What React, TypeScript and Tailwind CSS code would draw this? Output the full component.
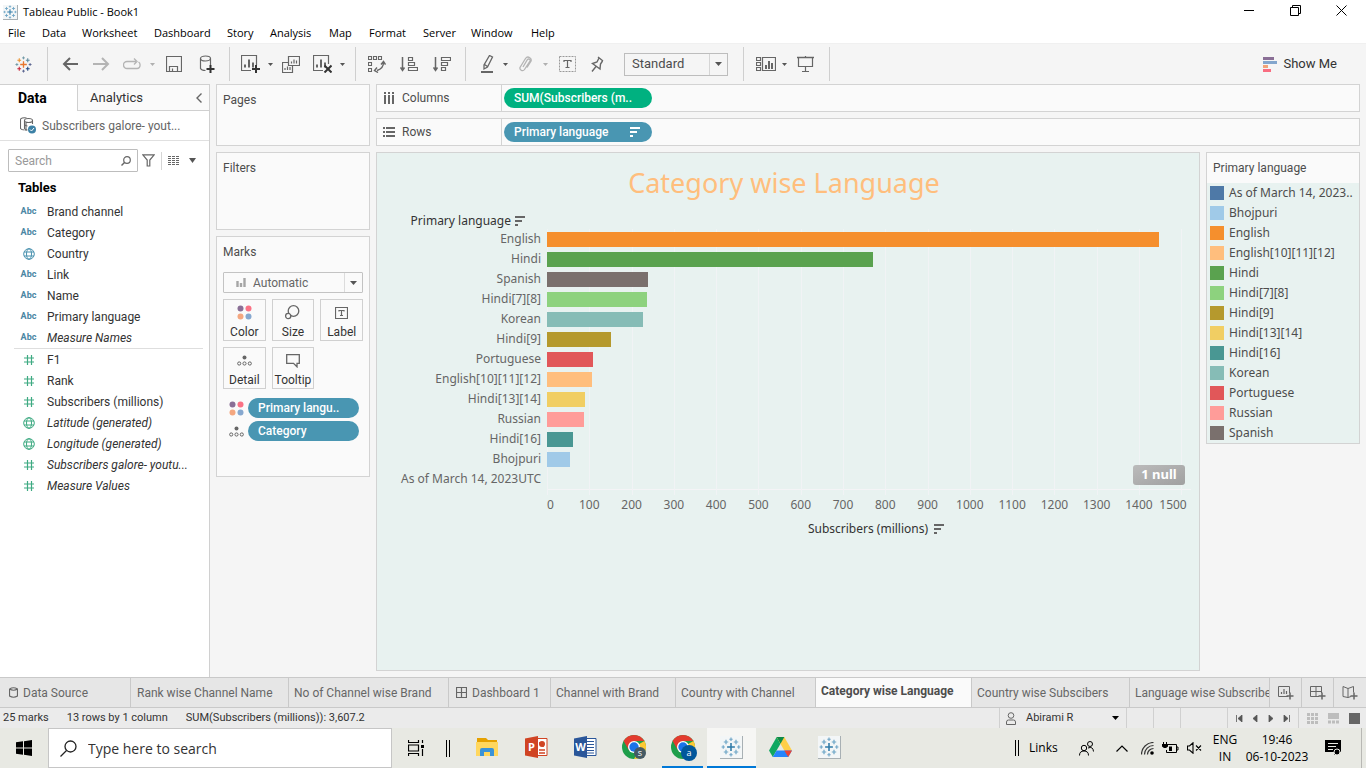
import React from "react";

type Kids = { children?: React.ReactNode };

function Ic({ w, h, children, className = "" }: Kids & { w: number; h: number; className?: string }) {
  return (
    <svg width={w} height={h} viewBox={`0 0 ${w} ${h}`} fill="none" stroke="#666" strokeWidth="1" className={`block shrink-0 ${className}`} aria-hidden="true">
      {children}
    </svg>
  );
}

function Logo({ mono = false, size = 18 }: { mono?: boolean; size?: number }) {
  const c = (x: string) => (mono ? "#6ea5c6" : x);
  return (
    <svg width={size} height={size} viewBox="0 0 18 18" fill="none" strokeWidth="1.1" className="block shrink-0" aria-hidden="true">
      <path d="M9 5.500v7M5.500 9h7" stroke={mono ? "#2f7ba8" : "#e8762d"} strokeWidth="1.4" />
      <path d="M4.500 2.500v4M2.500 4.500h4" stroke={c("#eb912c")} />
      <path d="M13.500 2.500v4M11.500 4.500h4" stroke={c("#59879b")} />
      <path d="M4.500 11.500v4M2.500 13.500h4" stroke={c("#c72035")} />
      <path d="M13.500 11.500v4M11.500 13.500h4" stroke={c("#1f447e")} />
      <path d="M9 .5v3M7.500 2h3" stroke={c("#7199a6")} strokeWidth="1" />
      <path d="M9 14.500v3M7.500 16h3" stroke={c("#5b6591")} strokeWidth="1" />
      <path d="M2 7.500v3M.5 9h3" stroke={c("#7199a6")} strokeWidth="1" />
      <path d="M16 7.500v3M14.500 9h3" stroke={c("#5b6591")} strokeWidth="1" />
    </svg>
  );
}

function LogoTile({ size, pad }: { size: number; pad: string }) {
  return (
    <span className={`block border-r border-b border-[#a8b0b4] bg-[#f3f6f7] ${pad}`}>
      <Logo mono size={size} />
    </span>
  );
}

function Caret({ light = false }: { light?: boolean }) {
  return (
    <svg width="5" height="3" viewBox="0 0 5 3" className="block" aria-hidden="true">
      <path d="M0 0h5L2.500 3z" fill={light ? "#b0b0b0" : "#555"} />
    </svg>
  );
}

function Tool({ label, className, children }: Kids & { label: string; className: string }) {
  return (
    <button type="button" aria-label={label} className={`flex h-full shrink-0 items-center justify-center ${className}`}>
      {children}
    </button>
  );
}

const Sep = ({ className = "" }: { className?: string }) => <span className={`h-[34px] w-px shrink-0 bg-[#cfcfcf] ${className}`} />;

function SortBars({ color = "#666" }: { color?: string }) {
  return (
    <Ic w={10} h={10}>
      <path d="M0 1h10M0 5h7M0 9h3" stroke={color} strokeWidth="2" />
    </Ic>
  );
}

function Bars3({ x, y }: { x: number; y: number }) {
  return <path d={`M${x} ${y}v-3M${x + 4} ${y}v-8M${x + 8} ${y}v-5`} strokeWidth="2" />;
}

function TitleBar() {
  return (
    <header className="flex h-6 items-center bg-white pl-[3px] text-[11px] text-black">
      <LogoTile size={14} pad="" />
      <h1 className="ml-[5px]">Tableau Public - Book1</h1>
      <div className="mr-0.5 ml-auto flex h-full items-center pb-[3px]">
        <button type="button" aria-label="Minimise" className="flex h-full w-[46px] items-center justify-center">
          <Ic w={11} h={11}><path d="M0 5.500h10" stroke="#000" /></Ic>
        </button>
        <button type="button" aria-label="Restore" className="flex h-full w-[46px] items-center justify-center">
          <Ic w={11} h={11}><path d="M.5 2.500h8v8h-8zM2.500 2.500v-2h8v8h-2" stroke="#000" /></Ic>
        </button>
        <button type="button" aria-label="Close" className="flex h-full w-[46px] items-center justify-center">
          <Ic w={11} h={11}><path d="M.5.5l10 10M10.500.5l-10 10" stroke="#000" /></Ic>
        </button>
      </div>
    </header>
  );
}

const menus = [
  ["File", "w-[34px]"],
  ["Data", "w-10"],
  ["Worksheet", "w-[72px]"],
  ["Dashboard", "w-[73px]"],
  ["Story", "w-[43px]"],
  ["Analysis", "w-[59px]"],
  ["Map", "w-10"],
  ["Format", "w-[54px]"],
  ["Server", "w-12"],
  ["Window", "w-[60px]"],
  ["Help", "w-10"],
];

function MenuBar() {
  return (
    <nav aria-label="Main menu" className="flex h-[19px] items-center bg-white pl-2 text-[11px] text-black">
      {menus.map(([m, w]) => (
        <button type="button" key={m} className={`text-left whitespace-nowrap ${w}`}>{m}</button>
      ))}
    </nav>
  );
}

function Toolbar() {
  return (
    <div role="toolbar" aria-label="Worksheet tools" className="flex h-[41px] items-center border-t border-[#f0f0f0] bg-[#f5f5f5]">
      <Tool label="Start page" className="w-[47px]"><Logo size={17} /></Tool>
      <Sep />
      <Tool label="Undo" className="ml-1.5 w-8">
        <Ic w={17} h={14}><path d="M16 7H2M8 1L2 7l6 6" strokeWidth="2" /></Ic>
      </Tool>
      <Tool label="Redo" className="w-[30px]">
        <Ic w={17} h={14}><path d="M0 7h14M9 1l6 6-6 6" stroke="#b4b4b4" strokeWidth="2" /></Ic>
      </Tool>
      <Tool label="Replay" className="w-8">
        <Ic w={18} h={12}><path d="M10 10.500H4a3.500 3.500 0 010-7h9M11 .5l3 3-3 3M14 10.500a3 3 0 003-3.500a3 3 0 00-1.500-3M10 10.500h4" stroke="#b4b4b4" strokeWidth="1.300" /></Ic>
      </Tool>
      <Tool label="Replay options" className="w-[9px]"><Caret light /></Tool>
      <Tool label="Save" className="w-[34px]">
        <Ic w={16} h={16}><path d="M.5.5h15v15H.5zM3.500 15.500v-5h8v5M6.500 15.500v-3" strokeWidth="1.200" /></Ic>
      </Tool>
      <Tool label="New data source" className="w-[30px]">
        <Ic w={17} h={18}><path d="M2.500 3.500v10q1 2 5 2M12.500 3.500V10" strokeWidth="1.200" /><ellipse cx="7.500" cy="3.500" rx="5" ry="2.500" strokeWidth="1.200" /><path d="M12.500 10v8M8.500 14h8" stroke="#333" strokeWidth="2" /></Ic>
      </Tool>
      <Sep className="ml-2" />
      <Tool label="New worksheet" className="ml-1.5 w-[29px]">
        <Ic w={19} h={18}><path d="M10 15.500H.5V.5h15V10" strokeWidth="1.200" /><Bars3 x={4} y={12.500} /><path d="M15 10v8M11 14h8" stroke="#333" strokeWidth="2" /></Ic>
      </Tool>
      <Tool label="New worksheet options" className="w-2.5"><Caret /></Tool>
      <Tool label="Duplicate" className="w-8">
        <Ic w={18} h={17}><path d="M6.500.5h11v9h-11zM6.500 6.500h-6v10h10v-7" strokeWidth="1.200" /><path d="M9.500 7.500v-2M12 7.500v-4M14.500 7.500v-3M3 14v-2M5.500 14v-3.500M8 14v-3" strokeWidth="1.200" /></Ic>
      </Tool>
      <Tool label="Clear sheet" className="w-[30px]">
        <Ic w={19} h={18}><path d="M10 15.500H.5V.5h15V9" strokeWidth="1.200" /><Bars3 x={4} y={12.500} /><path d="M11.500 10.500l7 7M18.500 10.500l-7 7" stroke="#333" strokeWidth="2" /></Ic>
      </Tool>
      <Tool label="Clear options" className="w-2.5"><Caret /></Tool>
      <Sep className="ml-2" />
      <Tool label="Swap rows and columns" className="ml-[5px] w-8">
        <Ic w={18} h={17}><path d="M.5.5h3v3h-3zM5.500.5h3v3h-3zM10.500.5h3v3h-3zM.5 6.500h3v3h-3zM.5 12.500h3v3h-3z" strokeWidth="1.100" /><path d="M15.500 6.500q0 6-6.500 8M13 8.500l2.500-3 2 3M9 11.500l-2.500 3 3.500 2" strokeWidth="1.400" /></Ic>
      </Tool>
      <Tool label="Sort ascending" className="w-8">
        <Ic w={18} h={15}><path d="M2.500 0v13M.5 10.500l2 3 2-3" strokeWidth="1.500" /><path d="M8.500.5h4v3h-4zM8.500 5.500h6v3h-6zM8.500 10.500h9v3h-9z" strokeWidth="1.200" /></Ic>
      </Tool>
      <Tool label="Sort descending" className="w-[34px]">
        <Ic w={18} h={15}><path d="M2.500 0v13M.5 10.500l2 3 2-3" strokeWidth="1.500" /><path d="M8.500.5h9v3h-9zM8.500 5.500h6v3h-6zM8.500 10.500h4v3h-4z" strokeWidth="1.200" /></Ic>
      </Tool>
      <Sep className="ml-1.5" />
      <Tool label="Highlight" className="ml-[7px] w-7">
        <Ic w={13} h={18}><path d="M8.500.5l3 1.500-5 10-3.500 2v-4zM3.500 9.500l3 2" strokeWidth="1.300" /><path d="M0 17h12" strokeWidth="2" /></Ic>
      </Tool>
      <Tool label="Highlight options" className="w-[9px]"><Caret /></Tool>
      <Tool label="Group" className="w-[30px]">
        <Ic w={13} h={16}><path d="M4 11l4.500-7.500a1.500 1.500 0 012.500 1.500l-5.500 8.500a2.500 2.500 0 01-4.500-2L6.500 2.500a3 3 0 015 3.500L8 11.500" stroke="#b4b4b4" strokeWidth="1.300" /></Ic>
      </Tool>
      <Tool label="Group options" className="w-2.5"><Caret light /></Tool>
      <Tool label="Show mark labels" className="w-[34px]">
        <Ic w={17} h={16}><path d="M.5.5h16v15H.5z" stroke="#999" strokeDasharray="2 1" /><path d="M5 6V4.500h7V6M8.500 4.500v7M6.500 11.500h4" strokeWidth="1.200" /></Ic>
      </Tool>
      <Tool label="Fix axes" className="w-[26px]">
        <Ic w={13} h={16}><path d="M7 1l5 4M8 2L6 6 1.500 7.500l7.500 5.500.5-5 2-3M5 10.500L1 15.500" strokeWidth="1.400" /></Ic>
      </Tool>
      <div className="relative ml-3.5 flex h-[23px] w-[104px] shrink-0 items-center border border-[#bdbdbd] bg-[#f5f5f5]">
        <select aria-label="Fit" defaultValue="Standard" className="h-full w-full appearance-none bg-transparent pl-[7px] text-[13px] text-[#4d4d4d]">
          <option>Standard</option>
          <option>Entire View</option>
        </select>
        <span className="pointer-events-none absolute inset-y-0 right-0 flex w-[18px] items-center justify-center border-l border-[#d5d5d5]">
          <svg width="7" height="4" viewBox="0 0 7 4" aria-hidden="true"><path d="M0 0h7L3.500 4z" fill="#555" /></svg>
        </span>
      </div>
      <Sep className="ml-[15px]" />
      <Tool label="Show or hide cards" className="ml-2 w-7">
        <Ic w={20} h={15}><path d="M.5.5h4v3h-4zM.5 5.500h4v3h-4zM.5 10.500h4v3h-4zM6.500.5h13v13h-13z" strokeWidth="1.200" /><path d="M10 12V8M13 12V4M16 12V6" strokeWidth="2" /></Ic>
      </Tool>
      <Tool label="Card options" className="w-2"><Caret /></Tool>
      <Tool label="Presentation mode" className="w-[34px]">
        <Ic w={17} h={16}><path d="M0 1.500h17" strokeWidth="1.500" /><path d="M1.500 2v8.500h14V2M8.500 0v2M8.500 10.500v5M5 15.500h7" strokeWidth="1.200" /></Ic>
      </Tool>
      <Sep className="ml-[7px]" />
      <button type="button" className="mr-[29px] ml-auto flex items-center gap-1.5 text-[13px] text-[#333]">
        <Ic w={14} h={15}>
          <path d="M0 1.500h11" stroke="#8a6f96" strokeWidth="3" />
          <path d="M0 5.500h14" stroke="#83a6cd" strokeWidth="3" />
          <path d="M0 9.500h5" stroke="#f2a378" strokeWidth="3" />
          <path d="M0 13.500h8" stroke="#f96d81" strokeWidth="3" />
        </Ic>
        Show Me
      </button>
    </div>
  );
}

type Kind = "abc" | "geo" | "num" | "geonum";
type Field = { name: string; kind: Kind; generated?: boolean };

const dimensions: Field[] = [
  { name: "Brand channel", kind: "abc" },
  { name: "Category", kind: "abc" },
  { name: "Country", kind: "geo" },
  { name: "Link", kind: "abc" },
  { name: "Name", kind: "abc" },
  { name: "Primary language", kind: "abc" },
  { name: "Measure Names", kind: "abc", generated: true },
];

const measures: Field[] = [
  { name: "F1", kind: "num" },
  { name: "Rank", kind: "num" },
  { name: "Subscribers (millions)", kind: "num" },
  { name: "Latitude (generated)", kind: "geonum", generated: true },
  { name: "Longitude (generated)", kind: "geonum", generated: true },
  { name: "Subscribers galore- youtu...", kind: "num", generated: true },
  { name: "Measure Values", kind: "num", generated: true },
];

function FieldIcon({ kind }: { kind: Kind }) {
  if (kind === "abc") return <span className="text-[9px] font-bold text-[#4a86a3]">Abc</span>;
  if (kind === "num")
    return (
      <Ic w={10} h={10}><path d="M3.500 0v10M7.500 0v10M0 3h10M0 7h10" stroke="#3eaa82" strokeWidth="1.200" /></Ic>
    );
  const c = kind === "geo" ? "#4a92af" : "#3eaa82";
  return (
    <Ic w={12} h={12}>
      <circle cx="6" cy="6" r="5.300" stroke={c} />
      <ellipse cx="6" cy="6" rx="2.500" ry="5.300" stroke={c} />
      <path d="M1 4h10M1 8h10" stroke={c} />
    </Ic>
  );
}

function FieldList({ items }: { items: Field[] }) {
  return (
    <ul>
      {items.map((f) => (
        <li key={f.name} className={`flex h-[21px] items-center text-[12px] text-[#333] ${f.generated ? "italic" : ""}`}>
          <span className="flex w-[29px] shrink-0 items-center justify-center not-italic"><FieldIcon kind={f.kind} /></span>
          <span className="ml-1 whitespace-nowrap">{f.name}</span>
        </li>
      ))}
    </ul>
  );
}

function DataPane() {
  return (
    <aside className="flex w-[210px] shrink-0 flex-col border-t border-r border-[#d0d0d0] bg-white">
      <div className="flex h-[26px] text-[13px]">
        <button type="button" className="w-[77px] pl-[18px] text-left text-[14px] font-bold text-black">Data</button>
        <div className="flex flex-1 items-center border-b border-l border-[#d0d0d0] bg-[#fafafa]">
          <button type="button" className="flex-1 pl-3 text-left text-[#333]">Analytics</button>
          <button type="button" aria-label="Collapse pane" className="pr-[7px]">
            <Ic w={6} h={10}><path d="M5.500.5L1 5l4.500 4.500" strokeWidth="1.400" /></Ic>
          </button>
        </div>
      </div>
      <div className="flex h-[30px] items-center border-b border-[#e0e0e0] pl-5 text-[12px] text-[#666]">
        <Ic w={17} h={17}>
          <path d="M.5 3v8.500q1 1.500 4 1.500M.5 3a4 2 0 016-2M6 14V6" strokeWidth="1.100" />
          <ellipse cx="8.500" cy="3.500" rx="4" ry="2" strokeWidth="1.100" />
          <path d="M4.500 3.500v8q1 1.500 3 1.500M12.500 3.500V7M4.500 7.500q1 1.500 3 1.500" strokeWidth="1.100" />
          <circle cx="12" cy="12.500" r="4" fill="#3c81a6" stroke="none" />
          <path d="M10 12.500l1.500 1.500 2.500-3" stroke="#fff" />
        </Ic>
        <span className="ml-[5px] whitespace-nowrap">Subscribers galore- yout...</span>
      </div>
      <div className="flex items-center pt-2 pl-2">
        <div className="flex h-[23px] w-[130px] items-center rounded-[1px] border border-[#bdbdbd] pr-1.5">
          <input type="search" aria-label="Search fields" placeholder="Search" className="w-full min-w-0 bg-transparent pl-1.5 text-[12px] placeholder:text-[#999] focus:outline-none" />
          <Ic w={10} h={10}><circle cx="6" cy="4" r="3.300" strokeWidth="1.200" /><path d="M3.500 6.500L.5 9.500" strokeWidth="1.400" /></Ic>
        </div>
        <button type="button" aria-label="Filter fields" className="ml-1">
          <Ic w={13} h={13}><path d="M.8.800h11.400L7.800 6v6H5.200V6z" strokeWidth="1.200" /></Ic>
        </button>
        <span className="ml-1.5 h-[18px] w-px bg-[#d5d5d5]" />
        <button type="button" aria-label="View fields as" className="ml-1.5 flex items-center gap-2">
          <Ic w={13} h={9}><path d="M0 .5h12M0 2.500h12M0 4.500h12M0 6.500h12M0 8.500h12" strokeDasharray="3 1" /></Ic>
          <svg width="7" height="5" viewBox="0 0 7 5" aria-hidden="true"><path d="M0 0h7L3.500 5z" fill="#555" /></svg>
        </button>
      </div>
      <h2 className="mt-[7px] pl-[18px] text-[13px] leading-[18px] font-bold text-black">Tables</h2>
      <div className="mt-1 pr-1.5 pl-[14px]">
        <FieldList items={dimensions} />
        <hr className="border-[#dedede]" />
        <FieldList items={measures} />
      </div>
    </aside>
  );
}

function ColorDots() {
  return (
    <Ic w={15} h={15}>
      <g stroke="none">
        <circle cx="3.500" cy="3.500" r="3" fill="#8a6f96" />
        <circle cx="11.500" cy="3.500" r="3" fill="#fa7285" />
        <circle cx="3.500" cy="11.500" r="3" fill="#f4a780" />
        <circle cx="11.500" cy="11.500" r="3" fill="#86a8cf" />
      </g>
    </Ic>
  );
}

function DetailDots() {
  return (
    <Ic w={15} h={11}>
      <circle cx="7.500" cy="2.500" r="2" fill="#666" stroke="none" />
      <circle cx="2.200" cy="8.500" r="1.600" />
      <circle cx="7.500" cy="8.500" r="1.600" />
      <circle cx="12.800" cy="8.500" r="1.600" />
    </Ic>
  );
}

const markButtons: [string, React.ReactNode][] = [
  ["Color", <ColorDots />],
  ["Size", <Ic w={15} h={15}><circle cx="8.500" cy="6" r="5.300" strokeWidth="1.300" /><circle cx="3.200" cy="11" r="2.600" fill="#fafafa" strokeWidth="1.300" /></Ic>],
  ["Label", <Ic w={13} h={12}><path d="M.5.5h12v11H.5zM4 4.500V3.500h5v1M6.500 3.500v5M5 8.500h3" strokeWidth="1.200" /></Ic>],
  ["Detail", <DetailDots />],
  ["Tooltip", <Ic w={14} h={14}><path d="M.7.700h12.600v8.600h-2.300v3.500L7.500 9.300H.7z" strokeWidth="1.300" /></Ic>],
];

function Card({ title, className, children }: Kids & { title: string; className: string }) {
  return (
    <section className={`border border-[#d3d3d3] bg-[#fafafa] px-1.5 pt-1.5 text-[12px] text-[#4d4d4d] ${className}`}>
      <h2 className="leading-[18px]">{title}</h2>
      {children}
    </section>
  );
}

function Cards() {
  return (
    <div className="flex w-[154px] shrink-0 flex-col gap-1.5">
      <Card title="Pages" className="h-[62px]" />
      <Card title="Filters" className="h-[78px]" />
      <Card title="Marks" className="h-[241px]">
        <div className="relative mt-[11px] flex h-[21px] items-center rounded-[1px] border border-[#c3c3c3]">
          <select aria-label="Mark type" defaultValue="Automatic" className="h-full w-full appearance-none bg-transparent pl-[29px] text-[12px] text-[#666]">
            <option>Automatic</option>
            <option>Bar</option>
          </select>
          <span className="pointer-events-none absolute left-3">
            <Ic w={10} h={10}><path d="M1.500 9V3M5 9V5M8.500 9V0" stroke="#a5a5a5" strokeWidth="2.400" /></Ic>
          </span>
          <span className="pointer-events-none absolute inset-y-0 right-0 flex w-[18px] items-center justify-center border-l border-[#dcdcdc]">
            <svg width="7" height="4" viewBox="0 0 7 4" aria-hidden="true"><path d="M0 0h7L3.500 4z" fill="#555" /></svg>
          </span>
        </div>
        <div className="mt-1.5 grid grid-cols-3 gap-1.5">
          {markButtons.map(([name, icon]) => (
            <button type="button" key={name} className="flex h-[42px] flex-col items-center border border-[#d0d0d0] text-[12px] text-[#333]">
              <span className="flex h-[25px] items-center">{icon}</span>
              <span className="leading-[14px]">{name}</span>
            </button>
          ))}
        </div>
        <ul className="mt-[9px] flex flex-col gap-[3px]">
          {[["Primary langu..", <ColorDots />], ["Category", <DetailDots />]].map(([name, icon]) => (
            <li key={name as string} className="flex items-center pr-1 pl-1.5">
              {icon}
              <button type="button" className="ml-1 h-5 flex-1 rounded-full bg-[#4996b2] pl-2.5 text-left font-medium text-white">{name}</button>
            </li>
          ))}
        </ul>
      </Card>
    </div>
  );
}

function Shelf({ label, icon, children }: Kids & { label: string; icon: React.ReactNode }) {
  return (
    <section aria-label={label} className="flex h-7 items-center border border-[#d3d3d3] bg-[#fafafa] text-[12px]">
      <div className="flex h-full w-[125px] items-center gap-[7px] border-r border-[#d3d3d3] pl-1.5 text-[#4d4d4d]">
        {icon}
        {label}
      </div>
      {children}
    </section>
  );
}

type Row = { label: string; value: number; color: string };

const rows: Row[] = [
  { label: "English", value: 1448, color: "#f58f2d" },
  { label: "Hindi", value: 771, color: "#5aa24f" },
  { label: "Spanish", value: 239, color: "#7a706d" },
  { label: "Hindi[7][8]", value: 236.5, color: "#8dd27e" },
  { label: "Korean", value: 227, color: "#86bcb6" },
  { label: "Hindi[9]", value: 151.5, color: "#b5992d" },
  { label: "Portuguese", value: 109, color: "#e15759" },
  { label: "English[10][11][12]", value: 106.5, color: "#ffbe7d" },
  { label: "Hindi[13][14]", value: 90, color: "#f1ce63" },
  { label: "Russian", value: 87.5, color: "#ff9c99" },
  { label: "Hindi[16]", value: 61.5, color: "#499793" },
  { label: "Bhojpuri", value: 54.5, color: "#a0cae8" },
  { label: "As of March 14, 2023UTC", value: 0, color: "#4e79a7" },
];

const domain = 1523;
const ticks = Array.from({ length: 16 }, (_, i) => i * 100);
const pct = (v: number) => `${(v / domain) * 100}%`;

function View() {
  return (
    <main className="min-w-0 flex-1 border border-[#d3d3d3] bg-[#e8f2f0] pr-2 font-['Noto_Sans',sans-serif] text-[12px] text-[#666]">
      <h2 className="h-[60px] text-center text-[27px] leading-[60px] text-[#ffbe7d]">Category wise Language</h2>
      <div className="flex">
        <div className="w-[170px] shrink-0">
          <div className="flex h-4 items-center justify-end gap-1 pr-[22px] text-[#333]">
            Primary language
            <SortBars />
          </div>
          {rows.map((r) => (
            <div key={r.label} className="h-5 pr-1.5 text-right leading-5 whitespace-nowrap">{r.label}</div>
          ))}
        </div>
        <div className="min-w-0 flex-1 pt-4">
          <div className="relative border-b border-[#f4f4f6]">
            {ticks.map((t) => (
              <span key={t} className="absolute top-0 -bottom-1.5 w-px bg-[#f1f3f5]" style={{ left: pct(t) }} />
            ))}
            {rows.map((r) => (
              <div key={r.label} className="relative flex h-5 items-center">
                <div className="h-[15px]" style={{ width: pct(r.value), backgroundColor: r.color }} />
              </div>
            ))}
            <button type="button" className="absolute right-1.5 bottom-1 h-5 w-[52px] rounded-[3px] bg-linear-to-br from-[#bbb] to-[#a0a0a0] text-[13px] font-bold text-white">1 null</button>
          </div>
          <div className="relative h-[29px]">
            {ticks.map((t) => (
              <span
                key={t}
                className={`absolute top-[7px] leading-4 ${t === 0 ? "" : t === 1500 ? "-translate-x-[22px]" : "-translate-x-1/2"}`}
                style={{ left: pct(t) }}
              >
                {t}
              </span>
            ))}
          </div>
          <div className="flex h-5 items-center justify-center gap-1.5 pl-3.5 text-[#333]">
            Subscribers (millions)
            <SortBars />
          </div>
        </div>
      </div>
    </main>
  );
}

const legend: [string, string][] = [
  ["As of March 14, 2023..", "#4e79a7"],
  ["Bhojpuri", "#a0cae8"],
  ["English", "#f58f2d"],
  ["English[10][11][12]", "#ffbe7d"],
  ["Hindi", "#5aa24f"],
  ["Hindi[7][8]", "#8dd27e"],
  ["Hindi[9]", "#b5992d"],
  ["Hindi[13][14]", "#f1ce63"],
  ["Hindi[16]", "#499793"],
  ["Korean", "#86bcb6"],
  ["Portuguese", "#e15759"],
  ["Russian", "#ff9c99"],
  ["Spanish", "#7a706d"],
];

function Legend() {
  return (
    <aside className="w-[154px] shrink-0 self-start border border-[#d3d3d3] bg-[#e8f2f0]">
      <h2 className="h-[30px] bg-[#fafafa] pl-1.5 text-[12px] leading-[30px] text-[#4d4d4d]">Primary language</h2>
      <ul className="font-['Noto_Sans',sans-serif] text-[12px] text-[#4d4d4d]">
        {legend.map(([name, color]) => (
          <li key={name} className="flex h-5 items-center gap-[5px] pl-[3px] whitespace-nowrap">
            <span className="h-3.5 w-3.5 shrink-0" style={{ backgroundColor: color }} />
            {name}
          </li>
        ))}
      </ul>
    </aside>
  );
}

const sheets: { name: string; w: string; icon?: "db" | "dash"; active?: boolean }[] = [
  { name: "Data Source", w: "w-[131px] pl-[9px]", icon: "db" },
  { name: "Rank wise Channel Name", w: "w-[158px] pl-1.5" },
  { name: "No of Channel wise Brand", w: "w-[160px] pl-[5px]" },
  { name: "Dashboard 1", w: "w-[102px] pl-[7px]", icon: "dash" },
  { name: "Channel with Brand", w: "w-[125px] pl-[5px]" },
  { name: "Country with Channel", w: "w-[140px] pl-[5px]" },
  { name: "Category wise Language", w: "w-[156px] pl-[5px]", active: true },
  { name: "Country wise Subscibers", w: "w-[158px] pl-[5px]" },
];

const DashGlyph = () => <Ic w={11} h={11}><path d="M.5.5h10v10H.5zM5.500.5v10M.5 5.500h10" strokeWidth="1.200" /></Ic>;

function SheetTabs() {
  return (
    <nav aria-label="Sheets" className="flex h-[31px] border-y border-[#c9c9c9] bg-[#e6e6e6] text-[12px] text-[#666]">
      {sheets.map((s) => (
        <button
          type="button"
          key={s.name}
          className={`flex shrink-0 items-center gap-[5px] border-r border-[#c9c9c9] whitespace-nowrap ${s.w} ${s.active ? "bg-[#fafafa] pb-1 font-bold text-[#4d4d4d]" : ""}`}
        >
          {s.icon === "db" && <Ic w={9} h={11}><path d="M.5 2v7q4 2.500 8 0V2M.5 2q4-2.500 8 0q-4 2.500-8 0" strokeWidth="1.200" /></Ic>}
          {s.icon === "dash" && <DashGlyph />}
          {s.name}
        </button>
      ))}
      <button type="button" className="min-w-0 flex-1 overflow-hidden pl-[5px] text-left whitespace-nowrap">Language wise Subscribe</button>
      <button type="button" aria-label="New worksheet" className="flex w-8 shrink-0 items-center justify-center border-l border-[#c9c9c9]">
        <Ic w={16} h={14}><path d="M10 10.500H.5V.5h11V7" /><path d="M3.500 8V6M6 8V3M8.500 8V5" strokeWidth="1.200" /><path d="M12 6.500v7M8.500 10h7" strokeWidth="1.500" /></Ic>
      </button>
      <button type="button" aria-label="New dashboard" className="flex w-8 shrink-0 items-center justify-center border-l border-[#c9c9c9]">
        <Ic w={16} h={14}><path d="M9 10.500H.5V.5h11V7M6 .5v10M.5 5.500h11" /><path d="M12 6.500v7M8.500 10h7" strokeWidth="1.500" /></Ic>
      </button>
      <button type="button" aria-label="New story" className="flex w-[33px] shrink-0 items-center justify-center border-l border-[#c9c9c9]">
        <Ic w={16} h={14}><path d="M6 11.500l-5-1V.5l5 2 5.500-2V6.500M6 2.500v9l3-1" /><path d="M12 6.500v7M8.500 10h7" strokeWidth="1.500" /></Ic>
      </button>
    </nav>
  );
}

function StatusBar() {
  return (
    <div className="flex h-5 items-stretch bg-[#ebebeb] pl-[3px] text-[11px] text-[#333]">
      <span className="self-center">25 marks</span>
      <span className="ml-[18px] self-center">13 rows by 1 column</span>
      <span className="ml-[18px] self-center">SUM(Subscribers (millions)): 3,607.2</span>
      <button type="button" className="ml-auto flex w-[127px] items-center border-l border-[#d0d0d0] pl-1.5">
        <Ic w={10} h={13}><circle cx="5" cy="3.500" r="2.800" /><path d="M.5 12.500v-2.500q0-2 2-2h5q2 0 2 2v2.500z" /></Ic>
        <span className="ml-2.5">Abirami R</span>
        <svg width="7" height="4" viewBox="0 0 7 4" className="mr-[7px] ml-auto" aria-hidden="true"><path d="M0 0h7L3.500 4z" fill="#000" /></svg>
      </button>
      <span className="w-[27px] border-l border-[#d0d0d0]" />
      <span className="w-[27px] border-l border-[#d0d0d0]" />
      <span className="w-[47px] border-l border-[#d0d0d0]" />
      <div className="flex w-[71px] items-center justify-between border-l border-[#d0d0d0] px-[7px]">
        {["M1.500 0v7M7 0L3 3.500 7 7z", "M6 0L2 3.500 6 7z", "M2 0l4 3.500L2 7z", "M6.500 0v7M1 0l4 3.500L1 7z"].map((d, i) => (
          <button type="button" key={d} aria-label={["First sheet", "Previous sheet", "Next sheet", "Last sheet"][i]}>
            <Ic w={8} h={7}><path d={d} fill="#555" stroke="#555" strokeWidth="0.800" /></Ic>
          </button>
        ))}
      </div>
      <div className="flex w-[68px] items-center justify-between border-l border-[#d0d0d0] pr-1.5 pl-2">
        <button type="button" aria-label="Sheet sorter"><Ic w={11} h={11}><path d="M0 1.500h11M0 5.500h11M0 9.500h11" stroke="#bdbdbd" strokeWidth="3" strokeDasharray="3 1" /></Ic></button>
        <button type="button" aria-label="Filmstrip"><Ic w={11} h={11}><path d="M0 3h11" stroke="#bdbdbd" strokeWidth="6" /><path d="M0 9h11" stroke="#bdbdbd" strokeWidth="3" strokeDasharray="3 1" /></Ic></button>
        <button type="button" aria-label="Tabs"><Ic w={11} h={11}><path d="M0 5.500h11" strokeWidth="11" /></Ic></button>
      </div>
    </div>
  );
}

function Chrome({ badge, color, radius }: { badge: string; color: string; radius: number }) {
  return (
    <svg width="28" height="28" viewBox="0 0 28 28" aria-hidden="true">
      <circle cx="14" cy="14" r="12" fill="#1e9e4a" />
      <path d="M14 14L24.400 8A12 12 0 0114 26l5.200-9z" fill="#fcc934" />
      <path d="M3.600 8a12 12 0 0120.800 0H14l-5.200 9z" fill="#e33b2e" />
      <circle cx="14" cy="14" r="6" fill="#fff" />
      <circle cx="14" cy="14" r="4.700" fill="#1a73e8" />
      <circle cx="20" cy="20" r={radius} fill={color} />
      <text x="20" y="23" textAnchor="middle" fontSize="9" fill="#fff" fontFamily="Open Sans, sans-serif">{badge}</text>
    </svg>
  );
}

function OfficeIcon({ color, letter, children }: Kids & { color: string; letter: string }) {
  return (
    <svg width="24" height="24" viewBox="0 0 24 24" aria-hidden="true">
      <path d="M12 3.500h11v17H12z" fill="#fff" stroke={color} />
      {children}
      <path d="M1 3.500L14 1v22L1 20.500z" fill={color} />
      <text x="7.500" y="16" textAnchor="middle" fontSize="11" fontWeight="700" fill="#fff" fontFamily="Open Sans, sans-serif">{letter}</text>
    </svg>
  );
}

function Task({ label, state = "w-[49px] border-transparent", children }: Kids & { label: string; state?: string }) {
  return (
    <button type="button" aria-label={label} className={`flex h-full shrink-0 items-center justify-center border-b-2 ${state}`}>
      {children}
    </button>
  );
}

function Taskbar() {
  return (
    <footer className="flex h-10 items-center bg-[#e8e9e3] text-[12px] text-black">
      <button type="button" aria-label="Start" className="flex h-full w-12 shrink-0 items-center justify-center">
        <svg width="16" height="16" viewBox="0 0 16 16" aria-hidden="true"><path d="M0 2.300L7 1.300v6.200H0zM8 1.200L16 0v7.500H8zM0 8.500h7v6.200l-7-1zM8 8.500h8V16l-8-1.200z" fill="#000" /></svg>
      </button>
      <label className="flex h-full w-[344px] shrink-0 items-center border border-[#c6c6c6] bg-white pl-[11px]">
        <Ic w={17} h={17}><circle cx="10.500" cy="6.500" r="5.500" stroke="#222" strokeWidth="1.300" /><path d="M6.500 10.500L.5 16.500" stroke="#222" strokeWidth="1.300" /></Ic>
        <input type="text" aria-label="Type here to search" placeholder="Type here to search" className="ml-[11px] w-full min-w-0 bg-transparent text-[14px] placeholder:text-[#333] focus:outline-none" />
      </label>
      <button type="button" aria-label="Task view" className="flex h-full w-12 shrink-0 items-center justify-center">
        <Ic w={17} h={16}><path d="M.5 0v2.500h10V0M.5 16v-2.500h10V16M.5 5h10v6H.5zM14.500 0v3M14.500 9v7" stroke="#000" strokeWidth="1.200" /><path d="M13 5h3v3h-3z" fill="#000" stroke="none" /></Ic>
      </button>
      <Ic w={16} h={17}><path d="M6.500 0v17M9.500 0v17" stroke="#000" /></Ic>
      <div className="ml-1.5 flex h-full">
        <Task label="File Explorer">
          <svg width="22" height="20" viewBox="0 0 22 20" aria-hidden="true">
            <path d="M1 1h9l2 2h9v15H1z" fill="#e5a100" /><path d="M0 5h22v14H0z" fill="#ffd75e" /><path d="M4 19v-6q0-2 2-2h10q2 0 2 2v6h-4v-4H8v4z" fill="#3a93d8" />
          </svg>
        </Task>
        <Task label="PowerPoint"><OfficeIcon color="#d04423" letter="P"><path d="M15 8h4v4M15 15h6M15 18h6" stroke="#d04423" strokeWidth="1.500" fill="none" /><circle cx="18" cy="9" r="3" fill="#d04423" /></OfficeIcon></Task>
        <Task label="Word"><OfficeIcon color="#2a5699" letter="W"><path d="M14 6.500h7M14 9.500h7M14 12.500h7M14 15.500h7M14 18h7" stroke="#2a5699" fill="none" /></OfficeIcon></Task>
        <Task label="Chrome, profile S"><Chrome badge="s" color="#455a64" radius={6} /></Task>
        <Task label="Chrome, profile A" state="mx-1 w-[41px] border-[#0078d7]"><Chrome badge="a" color="#01579b" radius={8} /></Task>
        <Task label="Tableau Public" state="w-[49px] border-[#0078d7] bg-[#f6f6f4]"><LogoTile size={20} pad="p-px" /></Task>
        <Task label="Google Drive">
          <svg width="23" height="20" viewBox="0 0 23 20" aria-hidden="true">
            <path d="M7.700 0L0 13.500 3.800 20 11.500 6.700z" fill="#11a861" /><path d="M7.700 0h7.600L23 13.500h-7.700z" fill="#ffcf48" /><path d="M3.800 20l3.800-6.500H23L19.200 20z" fill="#2684fc" /><path d="M7.700 0h7.600l-3.800 6.700z" fill="#0c8a48" /><path d="M15.300 13.500H23L19.200 20z" fill="#ea4335" />
          </svg>
        </Task>
        <Task label="Tableau"><LogoTile size={20} pad="p-px" /></Task>
      </div>
      <div className="ml-auto flex h-full items-center">
        <Ic w={12} h={16}><path d="M4.500 0v16M7.500 0v16" stroke="#000" /></Ic>
        <button type="button" className="ml-1.5 w-[50px] text-left">Links</button>
        <button type="button" aria-label="People"><Ic w={15} h={15}><circle cx="5" cy="7" r="2.700" stroke="#000" /><circle cx="11" cy="3" r="2.500" stroke="#000" /><path d="M.5 14.500q0-4.500 4.500-4.500t4.500 4.500M9 7q5-2 5.500 3.500" stroke="#000" /></Ic></button>
        <button type="button" aria-label="Show hidden icons" className="ml-[22px]"><Ic w={12} h={7}><path d="M.5 6.500L6 1l5.500 5.500" stroke="#000" strokeWidth="1.200" /></Ic></button>
        <button type="button" aria-label="Network" className="ml-[13px]"><Ic w={13} h={13}><path d="M.5 12.500A12 12 0 0112.500.5M3.500 12.500a9 9 0 019-9M6.500 12.500a6 6 0 016-6" stroke="#333" strokeWidth="1.200" /><circle cx="11" cy="11" r="1.800" fill="#000" stroke="none" /></Ic></button>
        <button type="button" aria-label="Battery" className="ml-2"><Ic w={17} h={12}><path d="M6 2.500h8.500v8H4.500V8M14.500 5h1.500v3h-1.500M1.500 0v2M4.500 0v2" stroke="#000" /><path d="M0 2h6v2.500L4 6H2L0 4.500zM7 4.500h3v4.500H7z" fill="#000" stroke="none" /></Ic></button>
        <button type="button" aria-label="Muted" className="ml-2"><Ic w={15} h={12}><path d="M.5 4h2L6 .8v10.400L2.500 8h-2zM9 3.500l5 5M14 3.500l-5 5" stroke="#000" strokeWidth="1.100" /></Ic></button>
        <button type="button" className="ml-1.5 w-[34px] text-center leading-[17px]">ENG<br />IN</button>
        <button type="button" className="ml-0.5 w-[66px] text-center leading-[17px] whitespace-nowrap">19:46<br />06-10-2023</button>
        <button type="button" aria-label="Notifications" className="ml-[15px]">
          <Ic w={16} h={16}><path d="M0 0h16v12h-3l-4 3V12H0z" fill="#000" stroke="none" /><path d="M3 3.500h10M3 6.500h8M3 9.500h5" stroke="#e8e9e3" /><circle cx="12" cy="12" r="3" fill="#000" stroke="#e8e9e3" /></Ic>
        </button>
        <span className="mr-1 ml-5 h-full w-px bg-[#b8b8b4]" />
      </div>
    </footer>
  );
}

export default function App() {
  return (
    <div className="flex min-h-screen flex-col bg-[#f5f5f5] font-['Roboto',sans-serif]">
      <div className="font-['Open_Sans',sans-serif]">
        <TitleBar />
        <MenuBar />
      </div>
      <Toolbar />
      <div className="flex flex-1">
        <DataPane />
        <div className="flex min-w-0 flex-1 gap-1.5 pr-1.5 pb-1.5 pl-1.5">
          <Cards />
          <div className="flex min-w-0 flex-1 flex-col gap-1.5">
            <Shelf label="Columns" icon={<Ic w={12} h={12}><path d="M2 0v2M6 0v2M10 0v2M2 3v9M6 3v9M10 3v9" strokeWidth="2" /></Ic>}>
              <button type="button" className="ml-0.5 h-5 w-[148px] rounded-full bg-[#00b180] pl-2.5 text-left font-medium text-white">SUM(Subscribers (m..</button>
            </Shelf>
            <Shelf label="Rows" icon={<Ic w={12} h={12}><path d="M0 2h2M0 6h2M0 10h2M3 2h9M3 6h9M3 10h9" strokeWidth="2" /></Ic>}>
              <button type="button" className="ml-0.5 flex h-5 w-[148px] items-center justify-between rounded-full bg-[#4996b2] pr-3 pl-2.5 font-medium text-white">
                Primary language
                <SortBars color="#fff" />
              </button>
            </Shelf>
            <div className="flex flex-1 gap-1.5">
              <View />
              <Legend />
            </div>
          </div>
        </div>
      </div>
      <SheetTabs />
      <StatusBar />
      <div className="font-['Open_Sans',sans-serif]">
        <Taskbar />
      </div>
    </div>
  );
}
